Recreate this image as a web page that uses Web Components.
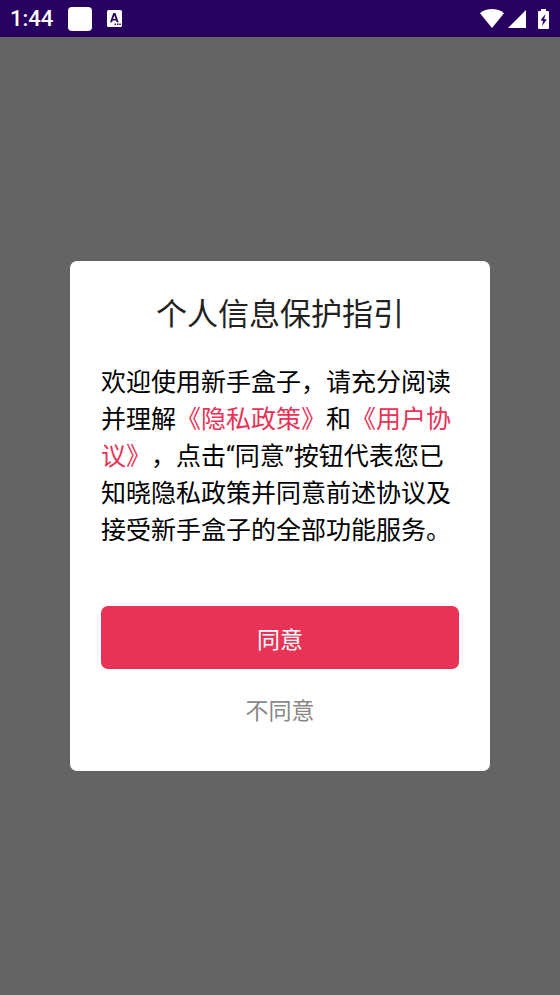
<!DOCTYPE html>
<html lang="zh-CN">
<head>
<meta charset="utf-8">
<meta name="viewport" content="width=device-width, initial-scale=1">
<title>个人信息保护指引</title>
<style>
html, body { height: 100%; margin: 0; }
body { font-family: Roboto, "Noto Sans CJK SC", sans-serif; background: #646464; text-spacing-trim: space-all; }
</style>
</head>
<body>
<app-screen>
  <status-bar slot="top" time="1:44"></status-bar>
  <consent-dialog>
    <span slot="title">个人信息保护指引</span>
    欢迎使用新手盒子，请充分阅读并理解<a href="#privacy">《隐私政策》</a>和<a href="#terms">《用户协议》</a>，点击“同意”按钮代表您已知晓隐私政策并同意前述协议及接受新手盒子的全部功能服务。
    <action-button slot="actions" kind="primary">同意</action-button>
    <action-button slot="actions" kind="plain">不同意</action-button>
  </consent-dialog>
</app-screen>
<script>
const define = (name, html, setup) => customElements.define(name, class extends HTMLElement {
  constructor() {
    super();
    this.attachShadow({ mode: "open" }).innerHTML = html;
  }
  connectedCallback() { if (setup) setup(this, this.shadowRoot); }
});

define("app-screen", `
<style>
:host { display: flex; flex-direction: column; min-height: 100vh; background: #646464; }
main { flex: 1; display: flex; align-items: center; justify-content: center; padding: 0 70px; }
</style>
<slot name="top"></slot>
<main><slot></slot></main>`);

define("status-bar", `
<style>
:host { display: flex; align-items: center; justify-content: space-between; height: 37px; padding: 0 11px 0 10px; box-sizing: border-box; background: #270060; color: #fff; }
div { display: flex; align-items: center; }
time { font-size: 22px; line-height: 24px; font-weight: 500; }
svg { display: block; fill: #fff; }
.left { gap: 15px; }
.right { gap: 4px; }
.right svg:last-child { margin-left: 8px; }
</style>
<div class="left">
  <time></time>
  <svg width="24" height="24" viewBox="0 0 24 24"><rect width="24" height="24" rx="4"/></svg>
  <svg width="15" height="17" viewBox="0 0 15 17"><path fill-rule="evenodd" d="M1.500 0h12a1.500 1.500 0 0 1 1.500 1.500v14a1.500 1.500 0 0 1-1.500 1.500h-12a1.500 1.500 0 0 1-1.500-1.500v-14a1.500 1.500 0 0 1 1.500-1.500zM6.300 3L3 12.300h2l.6-1.900h3.500l.6 1.900h2L8.400 3zM7.350 5.300l1.200 3.600h-2.400zM7.500 13.600v1.400H9v-1.400zM10 13.600v1.400h1.500v-1.400zM12.300 13.600v1.400h1.500v-1.400z"/></svg>
</div>
<div class="right">
  <svg width="24" height="19" viewBox="0 0 24 19"><path d="M12 19L0 4.200Q5.300 0 12 0T24 4.200z"/></svg>
  <svg width="18" height="18" viewBox="0 0 18 18"><path d="M18 0v18H0z"/></svg>
  <svg width="11" height="20" viewBox="0 0 11 20"><path fill-rule="evenodd" d="M3 0h5v2h2a1 1 0 0 1 1 1v16a1 1 0 0 1-1 1H1a1 1 0 0 1-1-1V3a1 1 0 0 1 1-1h2zM7.500 5L2.500 11.200l2.700.8-1.400 5L8.800 10.700l-2.600-.8z"/></svg>
</div>`, (host, root) => { root.querySelector("time").textContent = host.getAttribute("time"); });

define("consent-dialog", `
<style>
:host { display: block; flex: 1; max-width: 560px; background: #fff; border-radius: 7px; }
section { display: flex; flex-direction: column; padding: 33px 31px 31px; }
h1 { margin: 0 0 28px; font-size: 31px; line-height: 42px; font-weight: 400; text-align: center; color: #222; }
p { margin: 0 0 57px; font-size: 25px; line-height: 37px; color: #000; }
::slotted(a) { color: #e83356; text-decoration: none; }
footer { display: flex; flex-direction: column; gap: 8px; }
</style>
<section role="dialog" aria-modal="true" aria-labelledby="t">
  <h1 id="t"><slot name="title"></slot></h1>
  <p><slot></slot></p>
  <footer><slot name="actions"></slot></footer>
</section>`);

define("action-button", `
<style>
:host { display: block; }
button { display: block; width: 100%; height: 63px; margin: 0; padding: 0; border: 0; border-radius: 7px; font-family: "Noto Sans CJK SC", sans-serif; font-size: 23px; line-height: 32px; background: #e83356; color: #fff; cursor: pointer; }
:host([kind="plain"]) button { background: none; color: #888; }
</style>
<button type="button"><slot></slot></button>`);
</script>
</body>
</html>
